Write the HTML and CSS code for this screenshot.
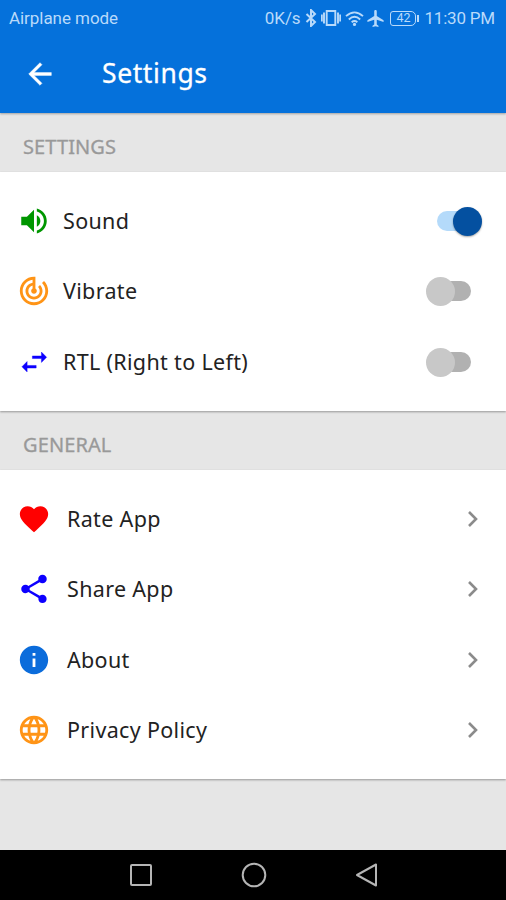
FILE: index.html
```html
<!DOCTYPE html>
<html lang="en">
<head>
<meta charset="utf-8">
<title>Settings</title>
<link rel="stylesheet" href="styles.css">
</head>
<body>
<div class="screen">
  <header class="top">
    <div class="status">
      <span class="carrier">Airplane mode</span>
      <span class="speed">0K/s</span>
      <svg class="bt" viewBox="0 0 12 18"><path d="M1.500 5 10 13 6 17V1l4 4-8.500 8" fill="none" stroke="currentColor" stroke-width="2"/></svg>
      <svg class="vib" viewBox="0 0 20 18"><path d="M5.700 2h8.600v14H5.700zM3 3.500v11M17 3.500v11M.8 5.500v7M19.200 5.500v7" fill="none" stroke="currentColor" stroke-width="1.900"/></svg>
      <svg class="wifi" viewBox="0 0 20 18"><path d="M1 6.500Q10-1.500 19 6.500M4 10Q10 4.500 16 10M7 13Q10 10.500 13 13" fill="none" stroke="currentColor" stroke-width="2"/><circle cx="10" cy="15.300" r="1.700" fill="currentColor"/></svg>
      <svg class="plane" viewBox="2 2 19 20"><path d="M21 16v-2l-8-5V3.500c0-.83-.67-1.500-1.500-1.500S10 2.670 10 3.500V9l-8 5v2l8-2.500V19l-2 1.500V22l3.500-1 3.500 1v-1.500L13 19v-5.500l8 2.500z" fill="currentColor"/></svg>
      <span class="battery">42</span>
      <span class="clock">11:30 PM</span>
    </div>
    <div class="appbar">
      <svg class="back" viewBox="0 0 24 24"><path d="M20 11H7.830l5.590-5.590L12 4l-8 8 8 8 1.410-1.410L7.830 13H20v-2z" fill="currentColor" stroke="currentColor" stroke-width=".3"/></svg>
      <h1>Settings</h1>
    </div>
  </header>
  <h2 class="s-settings">SETTINGS</h2>
  <section class="card switches">
    <div class="row">
      <svg class="icon green" viewBox="0 0 24 24"><path d="M3 9v6h4l5 5V4L7 9H3zm13.500 3c0-1.770-1.020-3.290-2.500-4.030v8.050c1.480-.73 2.500-2.250 2.500-4.020zM14 3.230v2.060c2.890.86 5 3.540 5 6.710s-2.110 5.850-5 6.710v2.060c4.010-.91 7-4.490 7-8.770s-2.990-7.860-7-8.770z"/></svg>
      <span class="label">Sound</span><span class="toggle on"></span>
    </div>
    <div class="row">
      <svg class="icon orange" viewBox="0 0 24 24"><path d="M19.070 4.930l-1.410 1.410C19.100 7.790 20 9.790 20 12c0 4.420-3.580 8-8 8s-8-3.580-8-8c0-4.080 3.050-7.440 7-7.930v2.020C8.160 6.570 6 9.030 6 12c0 3.310 2.690 6 6 6s6-2.690 6-6c0-1.660-.67-3.160-1.760-4.240l-1.410 1.410C15.550 9.900 16 10.900 16 12c0 2.210-1.790 4-4 4s-4-1.790-4-4c0-1.860 1.280-3.410 3-3.860v2.140c-.6.350-1 .98-1 1.720 0 1.100.9 2 2 2s2-.9 2-2c0-.74-.4-1.380-1-1.720V2h-1C6.480 2 2 6.480 2 12s4.480 10 10 10 10-4.480 10-10c0-2.760-1.120-5.260-2.930-7.070z"/></svg>
      <span class="label">Vibrate</span><span class="toggle"></span>
    </div>
    <div class="row">
      <svg class="icon blue" viewBox="0 0 24 24"><path d="M7.140 11.700 3.500 15.350l3.640 3.650v-2.740h6.400v-1.820h-6.400zM20.900 8.650 17.260 5v2.740h-6.400v1.820h6.400v2.740z" stroke="currentColor" stroke-width=".3"/></svg>
      <span class="label">RTL (Right to Left)</span><span class="toggle"></span>
    </div>
  </section>
  <h2 class="s-general">GENERAL</h2>
  <section class="card links">
    <div class="row">
      <svg class="icon red" viewBox="0 0 24 24"><path d="M12 21.350l-1.450-1.320C5.400 15.360 2 12.280 2 8.500 2 5.420 4.420 3 7.500 3c1.740 0 3.410.81 4.500 2.090C13.090 3.810 14.760 3 16.500 3 19.580 3 22 5.420 22 8.500c0 3.780-3.400 6.860-8.550 11.540L12 21.350z"/></svg>
      <span class="label">Rate App</span><svg class="chev" viewBox="0 0 12 18"><path d="m2 2 7 7-7 7"/></svg>
    </div>
    <div class="row">
      <svg class="icon blue" viewBox="0 0 24 24"><path d="M18 16.080c-.76 0-1.440.3-1.960.77L8.910 12.700c.05-.23.09-.46.09-.7s-.04-.47-.09-.7l7.050-4.110c.54.5 1.250.81 2.040.81 1.660 0 3-1.340 3-3s-1.340-3-3-3-3 1.340-3 3c0 .24.04.47.09.7L8.040 9.810C7.500 9.310 6.790 9 6 9c-1.660 0-3 1.340-3 3s1.340 3 3 3c.79 0 1.500-.31 2.040-.81l7.120 4.160c-.05.21-.08.43-.08.65 0 1.610 1.310 2.920 2.920 2.920s2.920-1.310 2.920-2.920-1.310-2.920-2.920-2.920z"/></svg>
      <span class="label">Share App</span><svg class="chev" viewBox="0 0 12 18"><path d="m2 2 7 7-7 7"/></svg>
    </div>
    <div class="row">
      <svg class="icon info" viewBox="0 0 24 24"><path d="M12 2C6.480 2 2 6.480 2 12s4.480 10 10 10 10-4.480 10-10S17.520 2 12 2zm1 15h-2v-6h2v6zm0-8h-2V7h2v2z"/></svg>
      <span class="label">About</span><svg class="chev" viewBox="0 0 12 18"><path d="m2 2 7 7-7 7"/></svg>
    </div>
    <div class="row">
      <svg class="icon orange" viewBox="0 0 24 24"><path d="M11.990 2C6.470 2 2 6.480 2 12s4.470 10 9.990 10C17.520 22 22 17.520 22 12S17.520 2 11.990 2zm6.930 6h-2.950c-.32-1.250-.78-2.450-1.380-3.560 1.840.63 3.370 1.910 4.330 3.560zM12 4.040c.83 1.200 1.480 2.530 1.910 3.960h-3.820c.43-1.430 1.080-2.760 1.910-3.960zM4.260 14C4.100 13.360 4 12.690 4 12s.1-1.360.26-2h3.380c-.08.66-.14 1.320-.14 2s.06 1.340.14 2H4.260zm.82 2h2.950c.32 1.250.78 2.450 1.380 3.560-1.840-.63-3.370-1.900-4.330-3.560zm2.950-8H5.080c.96-1.660 2.490-2.930 4.330-3.560C8.810 5.550 8.350 6.750 8.030 8zM12 19.960c-.83-1.200-1.480-2.530-1.910-3.960h3.820c-.43 1.430-1.080 2.760-1.910 3.960zM14.340 14H9.660c-.09-.66-.16-1.320-.16-2s.07-1.350.16-2h4.680c.09.65.16 1.320.16 2s-.07 1.340-.16 2zm.25 5.560c.6-1.110 1.060-2.310 1.380-3.560h2.950c-.96 1.650-2.490 2.930-4.330 3.560zM16.360 14c.08-.66.14-1.320.14-2s-.06-1.340-.14-2h3.380c.16.64.26 1.310.26 2s-.1 1.360-.26 2h-3.380z"/></svg>
      <span class="label">Privacy Policy</span><svg class="chev" viewBox="0 0 12 18"><path d="m2 2 7 7-7 7"/></svg>
    </div>
  </section>
  <nav class="navbar">
    <svg viewBox="0 0 26 26"><rect x="3" y="3" width="20" height="20" rx="1"/></svg>
    <svg viewBox="0 0 26 26"><circle cx="13" cy="13" r="11.300"/></svg>
    <svg viewBox="0 0 26 26"><path d="M22 2.500v21L3 13z" stroke-linejoin="round"/></svg>
  </nav>
</div>
</body>
</html>
```
FILE: styles.css
```css
* { box-sizing: border-box; }
body { margin: 0; background: #e6e6e6; font-family: "Noto Sans", sans-serif; }
svg { display: block; flex: none; }
.screen { height: 900px; display: flex; flex-direction: column; overflow: hidden; }
.top { height: 113px; flex: none; background: #0571db; color: #fff; box-shadow: 0 1px 2px rgba(0,0,0,.3); }
.status { height: 36px; display: flex; align-items: center; padding: 0 11px 0 9px; color: #b9dafa; font: 17px/36px Roboto, sans-serif; white-space: nowrap; }
.carrier { margin-right: auto; letter-spacing: -.05px; }
.speed { letter-spacing: -.1px; }
.clock { letter-spacing: -.2px; }
.bt { width: 12px; height: 18px; margin-left: 5px; }
.vib { width: 20px; height: 18px; margin-left: 4px; }
.wifi { width: 19px; height: 17px; margin-left: 4px; }
.plane { width: 17px; height: 17px; margin-left: 3px; }
.battery { position: relative; width: 26px; height: 15px; margin: 0 8px 0 6px; border: 1.500px solid; border-radius: 3px 5px 5px 3px; font: 12.500px/12px Roboto, sans-serif; text-align: center; }
.battery::after { content: ""; position: absolute; right: -4px; top: 3px; width: 2px; height: 7px; background: currentColor; }
.appbar { height: 76px; display: flex; align-items: center; padding-left: 23px; }
.back { width: 34px; height: 34px; }
h1 { margin: 0 0 2px 45px; font-size: 26.500px; font-weight: 400; line-height: 36px; letter-spacing: .6px; -webkit-text-stroke: .3px; }
h2 { margin: 0; flex: none; padding-left: 23px; font-size: 20px; font-weight: 400; letter-spacing: .1px; color: #999; -webkit-text-stroke: .3px; }
.s-settings { height: 59px; line-height: 68px; }
.s-general { height: 59px; line-height: 68px; }
.card { flex: none; background: #fff; padding: 14px 24px 14px 17px; box-shadow: 0 1px 2px rgba(0,0,0,.35); }
.switches { height: 239px; }
.links { height: 309px; }
.row { height: 70.300px; display: flex; align-items: center; }
.icon { width: 34px; height: 34px; fill: currentColor; }
.green { color: #009600; }
.orange { color: #ff9416; }
.blue { color: #0d00ff; }
.red { color: #f00; }
.info { color: #0b6cdb; }
.label { margin-right: auto; font-size: 21.500px; line-height: 30px; letter-spacing: .33px; color: #222; white-space: nowrap; }
.switches .label { margin-left: 12px; }
.links .label { margin-left: 16px; }
.toggle { position: relative; width: 45px; height: 28px; margin-right: 11px; }
.toggle::before { content: ""; position: absolute; left: 6px; right: 0; top: 4px; height: 20px; border-radius: 10px; background: #b1b1b1; }
.toggle::after { content: ""; position: absolute; left: 0; top: 0; width: 29px; height: 29px; border-radius: 50%; background: #c8c8c8; }
.toggle.on { margin-right: 0; }
.toggle.on::before { left: 0; right: 6px; background: #b4dafa; }
.toggle.on::after { left: 16px; background: #0450a0; box-shadow: 0 1px 2px rgba(0,0,0,.35); }
.chev { width: 12px; height: 18px; margin-right: 3px; fill: none; stroke: #8b8b8b; stroke-width: 2.600; }
.navbar { margin-top: auto; height: 50px; flex: none; background: #000; display: flex; justify-content: center; align-items: center; gap: 87px; padding-left: 2px; }
.navbar svg { width: 26px; height: 26px; fill: none; stroke: #b5b5b5; stroke-width: 2; }
```
